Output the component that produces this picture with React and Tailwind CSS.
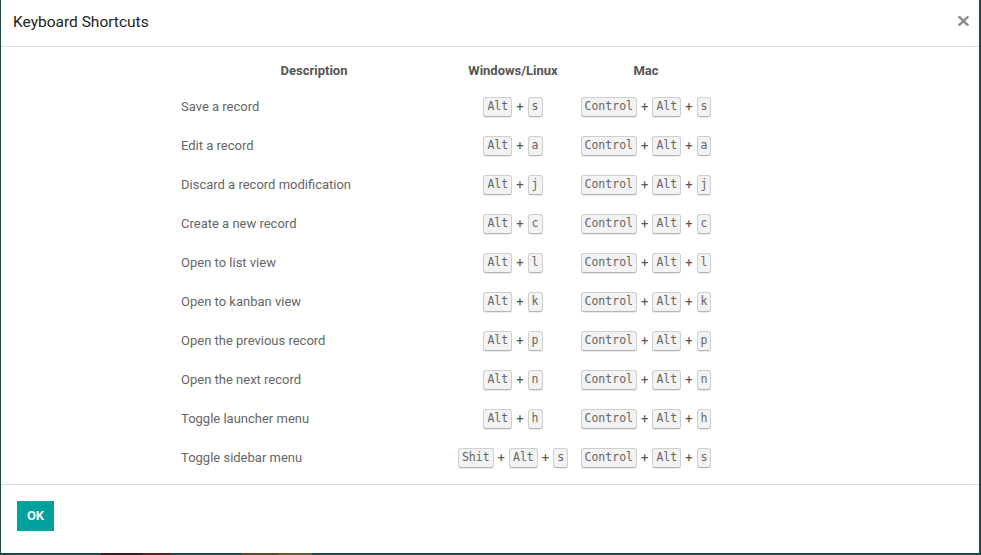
import React from "react";

const rows = [
  ["Save a record", ["Alt", "s"], "s"],
  ["Edit a record", ["Alt", "a"], "a"],
  ["Discard a record modification", ["Alt", "j"], "j"],
  ["Create a new record", ["Alt", "c"], "c"],
  ["Open to list view", ["Alt", "l"], "l"],
  ["Open to kanban view", ["Alt", "k"], "k"],
  ["Open the previous record", ["Alt", "p"], "p"],
  ["Open the next record", ["Alt", "n"], "n"],
  ["Toggle launcher menu", ["Alt", "h"], "h"],
  ["Toggle sidebar menu", ["Shit", "Alt", "s"], "s"],
];

function Kbd({ children }) {
  return (
    <span className="inline-flex h-[20px] items-center rounded-[3px] border border-[#cfcfcf] border-b-[#b5b5b5] bg-[#f3f3f3] px-[3px] pt-[1px] font-['DejaVu_Sans_Mono',monospace] text-[11.5px] leading-none text-[#666] shadow-[0_1px_0_rgba(0,0,0,0.08)]">
      {children}
    </span>
  );
}

function Combo({ keys }) {
  return (
    <div className="flex items-center justify-center">
      {keys.map((k, i) => (
        <React.Fragment key={i}>
          {i > 0 && <span className="mx-[4px] text-[13px] leading-none text-[#555]">+</span>}
          <Kbd>{k}</Kbd>
        </React.Fragment>
      ))}
    </div>
  );
}

export default function App() {
  return (
    <div className="flex h-[555px] w-[981px] flex-col bg-[#1e4a45] font-['Roboto',sans-serif]">
      <div className="ml-[1px] flex h-[553px] w-[978px] flex-col bg-white">
        <div className="relative flex h-[47px] shrink-0 items-center border-b border-[#dedde3] pl-[12px]">
          <span className="text-[15.5px] text-[#222]">Keyboard Shortcuts</span>
          <svg className="absolute left-[957px] top-[16px]" width="11" height="10" viewBox="0 0 11 10">
            <path d="M1.5 1.2 L9.5 8.8 M9.5 1.2 L1.5 8.8" stroke="#8c8c8c" strokeWidth="2.4" strokeLinecap="square" />
          </svg>
        </div>
        <div className="flex-1 pl-[175px] pt-[8px]">
          <div className="grid grid-cols-[276px_122px_144px] text-[13px]">
            <div className="flex h-[32px] items-center justify-center font-bold text-[#555]">Description</div>
            <div className="flex h-[32px] items-center justify-center font-bold text-[#555]">Windows/Linux</div>
            <div className="flex h-[32px] items-center justify-center font-bold text-[#555]">Mac</div>
            {rows.map(([d, win, m], i) => (
              <React.Fragment key={i}>
                <div className="flex h-[39px] items-center px-[5px] text-[#666]">{d}</div>
                <div className="flex h-[39px] items-center justify-center">
                  <Combo keys={win} />
                </div>
                <div className="flex h-[39px] items-center justify-center">
                  <Combo keys={["Control", "Alt", m]} />
                </div>
              </React.Fragment>
            ))}
          </div>
        </div>
        <div className="h-[69px] shrink-0 border-t border-[#dedde3] pl-[16px] pt-[16px]">
          <button className="flex h-[30px] w-[37px] items-center justify-center bg-[#00a09d] text-[13px] font-bold text-white">
            OK
          </button>
        </div>
      </div>
      <div className="flex h-[2px]">
        <div className="w-[101px]" />
        <div className="w-[42px] bg-[#3a1a1e]" />
        <div className="w-[28px] bg-[#5a2226]" />
        <div className="w-[71px]" />
        <div className="w-[36px] bg-[#5b4a2b]" />
        <div className="w-[34px] bg-[#6b5a33]" />
      </div>
    </div>
  );
}
